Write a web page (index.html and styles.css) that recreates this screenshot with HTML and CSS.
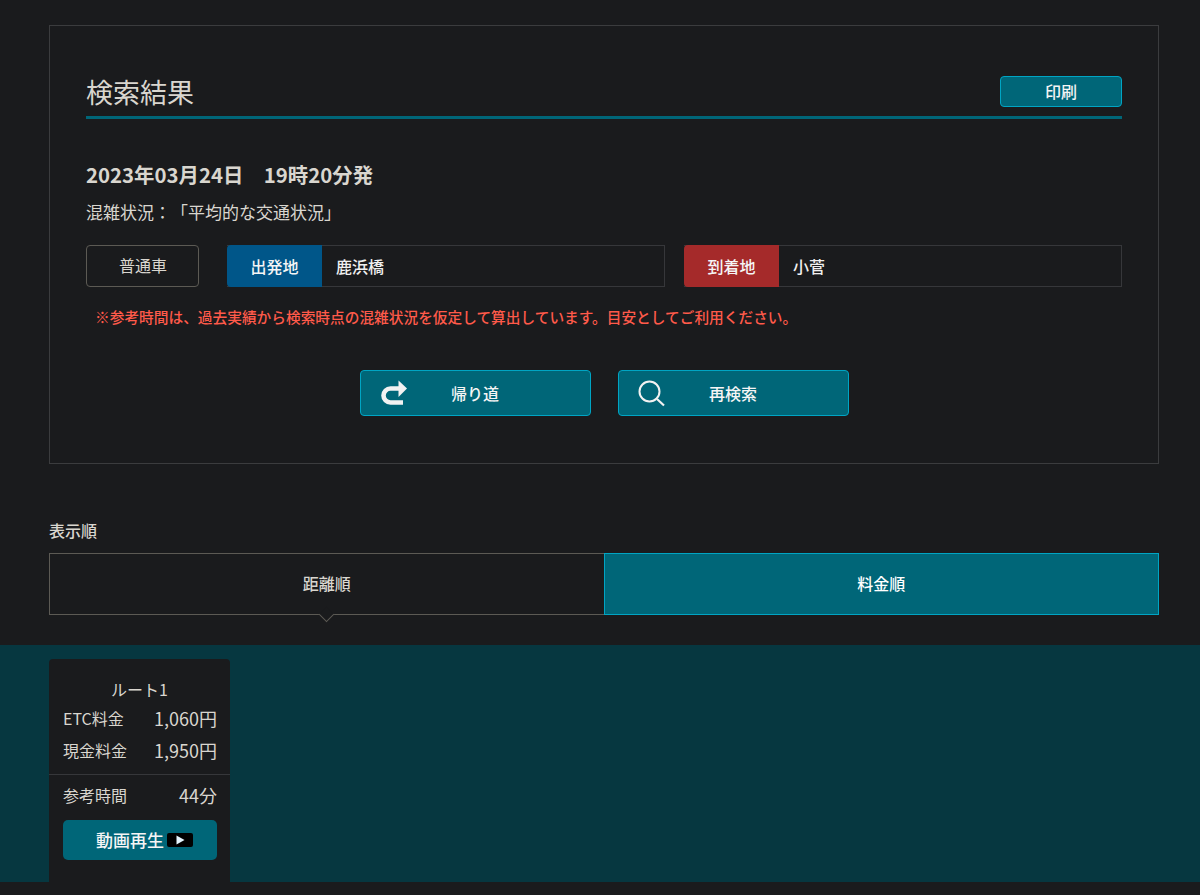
FILE: index.html
```html
<!doctype html>
<html lang="ja">
	<head>
		<meta charset="utf-8" />
		<title>検索結果</title>
		<link rel="stylesheet" href="styles.css">
	</head>
	<body>
		<section class="panel">
			<div class="title-row">
				<h1>検索結果</h1>
				<a href="#" class="btn btn-print">印刷</a>
			</div>
			<p class="date">2023年03月24日　19時20分発</p>
			<p class="status">混雑状況：「平均的な交通状況」</p>
			<div class="route-row">
				<div class="car">普通車</div>
				<div class="place">
					<span class="place-label from">出発地</span>
					<span class="place-name">鹿浜橋</span>
				</div>
				<div class="place">
					<span class="place-label to">到着地</span>
					<span class="place-name">小菅</span>
				</div>
			</div>
			<p class="note">※参考時間は、過去実績から検索時点の混雑状況を仮定して算出しています。目安としてご利用ください。</p>
			<div class="btn-container">
				<a href="#" class="btn btn-wide">
					<svg class="btn-icon" viewBox="0 0 28 28" width="28" height="28"><path d="M23 22.500H10.500a7 7 0 0 1 0-14H20" fill="none" stroke="#f2f2f2" stroke-width="4.600"/><path d="M18.500.500 27 8.500l-8.500 8.500Z" fill="#f2f2f2"/></svg>
					帰り道
				</a>
				<a href="#" class="btn btn-wide">
					<svg class="btn-icon" viewBox="0 0 28 28" width="28" height="28"><circle cx="11.500" cy="11.500" r="10" fill="none" stroke="#f2f2f2" stroke-width="2"/><path d="M19 19l7 6.500" stroke="#f2f2f2" stroke-width="2.200"/></svg>
					再検索
				</a>
			</div>
		</section>

		<div class="sort-label">表示順</div>
		<div class="tabs">
			<a href="#" class="tab">距離順</a>
			<a href="#" class="tab active">料金順</a>
		</div>

		<div class="result-band">
			<div class="card">
				<div class="card-name">ルート1</div>
				<dl class="fee first"><dt>ETC料金</dt><dd>1,060円</dd></dl>
				<dl class="fee"><dt>現金料金</dt><dd>1,950円</dd></dl>
				<dl class="fee time"><dt>参考時間</dt><dd>44分</dd></dl>
				<a href="#" class="play">動画再生<span class="play-mark"><svg viewBox="0 0 9 10" width="9" height="10"><path d="M.5.500l8 4.500-8 4.500Z" fill="#e6f6ff"/></svg></span></a>
			</div>
		</div>
	</body>
</html>
```

FILE: styles.css
```css
html, body, div, h1, p, dl, dt, dd { margin: 0; padding: 0; }
a { text-decoration: none; color: #fff; }
body { height: 895px; overflow: hidden; background: #1a1b1d; color: #d9d6cf; font-family: "Noto Sans CJK JP", "Noto Sans", sans-serif; font-size: 16px; text-spacing-trim: space-all; }

.panel { box-sizing: border-box; height: 439px; margin: 25px 41px 0 49px; padding: 50px 36px 0; border: 1px solid #3b3c3e; }
.title-row { box-sizing: border-box; display: flex; justify-content: space-between; align-items: flex-start; height: 43px; border-bottom: 3px solid #006678; }
h1 { font-size: 27px; font-weight: 400; line-height: 32px; color: #d9d6cf; }
.btn { box-sizing: border-box; display: flex; align-items: center; justify-content: center; background: #006678; border: 1px solid #00a5c4; border-radius: 4px; color: #f5f5f5; font-weight: 500; }
.btn-print { width: 122px; height: 31px; padding-bottom: 2px; }

.date { margin-top: 40px; font-size: 20.400px; font-weight: 700; line-height: 30px; }
.status { margin-top: 11px; font-size: 17px; line-height: 24px; }

.route-row { display: flex; margin-top: 21px; height: 42px; }
.car { box-sizing: border-box; width: 113px; margin-right: 28px; padding-left: 1px; line-height: 39px; text-align: center; border: 1px solid #5c5a54; border-radius: 4px; }
.place { box-sizing: border-box; display: flex; width: 438px; border: 1px solid #36373a; border-left: 0; }
.place + .place { margin-left: 19px; }
.place-label { width: 95px; margin: -1px 0; line-height: 42px; text-align: center; color: #f5f5f5; font-weight: 500; border-radius: 4px 0 0 4px; }
.place-label.from { background: #005689; }
.place-label.to { background: #a52a2a; }
.place-name { padding-left: 14px; line-height: 40px; color: #f0f0f0; font-weight: 500; }

.note { margin: 19px 0 0 9px; font-size: 14.700px; font-weight: 500; line-height: 22px; color: #ff5a4a; }

.btn-container { display: flex; justify-content: center; gap: 27px; margin-top: 42px; }
.btn-wide { position: relative; width: 231px; height: 46px; }
.btn-icon { position: absolute; left: 19px; top: 9px; }

.sort-label { margin: 55px 0 0 49px; font-weight: 500; line-height: 22px; }
.tabs { display: flex; margin: 12px 41px 0 49px; height: 62px; }
.tab { box-sizing: border-box; position: relative; flex: 1; line-height: 58px; text-align: center; font-weight: 500; color: #d9d6cf; border: 1px solid #5c5a54; }
.tab:first-child { border-right: 0; }
.tab:first-child::after { content: ""; position: absolute; left: 271px; bottom: -6px; width: 10px; height: 10px; background: #1a1b1d; border-right: 1px solid #5c5a54; border-bottom: 1px solid #5c5a54; transform: rotate(45deg); }
.tab.active { background: #006678; border-color: #00a5c4; color: #fff; }

.result-band { height: 223px; margin-top: 30px; padding: 14px 0 0 49px; background: #063740; }
.card { box-sizing: border-box; width: 181px; height: 223px; padding-top: 19px; background: #1a1b1d; border-radius: 4px 4px 0 0; }
.card-name { line-height: 22px; text-align: center; }
.fee { display: flex; justify-content: space-between; align-items: center; height: 32px; padding: 0 13px 0 14px; }
.fee.first { margin-top: 2px; }
.fee dd { font-size: 18px; }
.time { box-sizing: border-box; height: 37px; margin-top: 8px; padding-top: 4px; border-top: 1px solid #36373a; }
.play { box-sizing: border-box; display: flex; align-items: center; justify-content: center; gap: 3px; height: 40px; margin: 9px 13px 0 14px; padding: 0 0 2px 9px; background: #006678; border-radius: 5px; font-size: 17px; font-weight: 500; color: #f5f5f5; }
.play-mark { display: flex; align-items: center; justify-content: center; width: 26px; height: 14px; margin-top: 2px; background: #000; border-radius: 2px; }
```
